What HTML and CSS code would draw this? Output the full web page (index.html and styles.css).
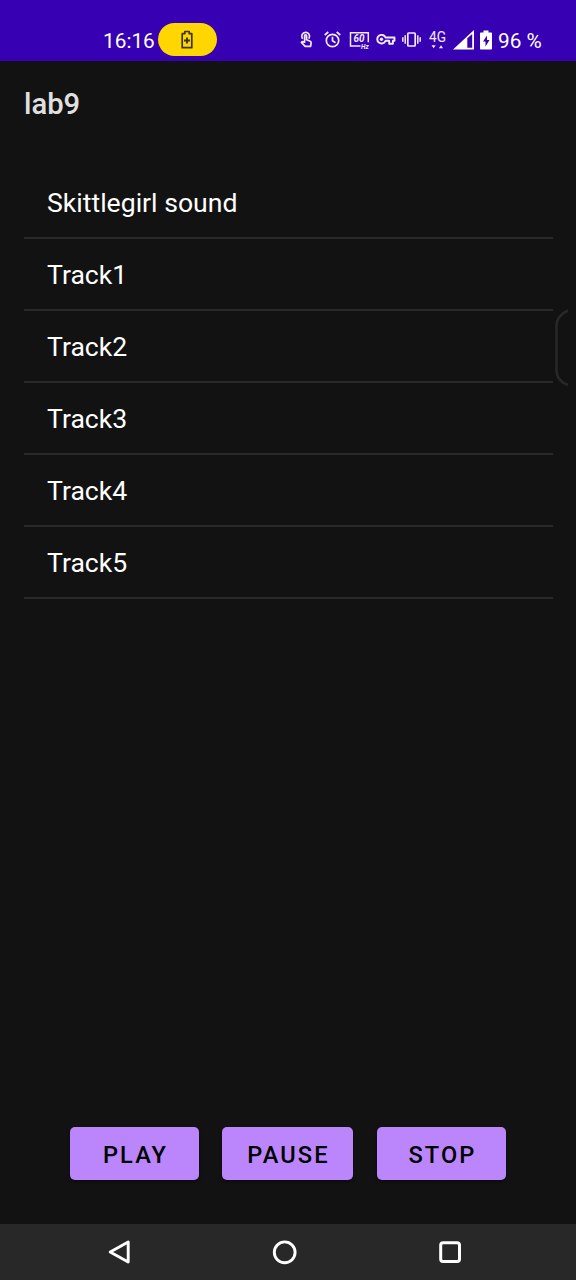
FILE: index.html
```html
<!DOCTYPE html>
<html lang="en">
<head>
<meta charset="utf-8">
<title>lab9</title>
<link rel="stylesheet" href="styles.css">
</head>
<body>
<div class="screen">
  <header class="status">
    <span class="clock">16:16</span>
    <span class="pill">
      <svg width="12" height="20" viewBox="0 0 12 20"><path d="M1.2 3.700h2.600V1.500h4.400v2.200h2.600v14H1.200z" fill="none" stroke="#3c3410" stroke-width="1.700" stroke-linejoin="round"/><path d="M6 7.500v6M3 10.500h6" stroke="#3c3410" stroke-width="1.900"/></svg>
    </span>
    <div class="icons">
      <svg width="26" height="20" viewBox="0 0 26 20"><g fill="none" stroke="#f3e9ff" stroke-width="1.700" stroke-linecap="round" stroke-linejoin="round"><path d="M3.300 8.200a3.900 3.900 0 1 1 6.800-.2"/><path d="M5.600 12.200V5.800c0-1.400 2-1.400 2 0v4l3.600 1.400c.8.300 1 .9.900 1.600l-.5 3.500H6.200l-3.800-4 .9-.6z"/></g></svg>
      <svg width="24" height="20" viewBox="0 0 24 20"><g fill="none" stroke="#f3e9ff" stroke-width="1.700"><circle cx="7.500" cy="10.500" r="6.200"/><path d="M7.500 6.800v4l3 1.900M-.3 5l3.600-3M15.300 5l-3.600-3"/></g></svg>
      <svg width="27" height="20" viewBox="0 0 27 20"><path d="M11.500 16H1.500V2.700h17.800v9.500" fill="none" stroke="#f3e9ff" stroke-width="1.500"/><text x="4.400" y="12.200" class="hz-num" textLength="11" lengthAdjust="spacingAndGlyphs">60</text><text x="12" y="18.500" class="hz">Hz</text></svg>
      <svg width="26" height="20" viewBox="0 0 26 20"><path d="M9.500 7.500h9v3.300h-1.600v3h-3.700v-3H9.500a4.300 4.300 0 1 1 0-3.300z" fill="none" stroke="#f3e9ff" stroke-width="1.900" stroke-linejoin="round"/><circle cx="5.500" cy="9.200" r="1.700" fill="#f3e9ff"/></svg>
      <svg width="26" height="20" viewBox="0 0 26 20"><rect x="5.800" y="3" width="7.400" height="13" rx=".8" fill="none" stroke="#f3e9ff" stroke-width="1.700"/><path d="M3.200 5.300v8.400M.8 7.200v4.600M15.800 5.300v8.400M18.200 7.200v4.600" stroke="#f3e9ff" stroke-width="1.500"/></svg>
      <svg width="24" height="20" viewBox="0 0 24 20"><text x="1" y="12" class="net" textLength="17" lengthAdjust="spacingAndGlyphs">4G</text><path d="M3.500 15.300h4.200l-2.100 3zM10.900 18.300h4.200l-2.100-3z" fill="#f3e9ff"/></svg>
      <svg width="26" height="20" viewBox="0 0 26 20"><path fill-rule="evenodd" d="M1 19.500 22 0v19.500zM15.300 8.300v9.400h4.900V4z" fill="#fff"/></svg>
      <svg width="17" height="20" viewBox="-1 0 17 20"><path d="M2 2.500h2.500V.5h5v2H12c.6 0 1 .4 1 1v15c0 .6-.4 1-1 1H2c-.6 0-1-.4-1-1v-15c0-.6.4-1 1-1z" fill="#fff"/><path d="M8 5.500 4 11.500h2.500v5L10.500 10H8z" fill="#3700a8"/></svg>
    </div>
    <span class="percent">96 %</span>
  </header>
  <h1 class="title">lab9</h1>
  <ul class="tracks">
    <li>Skittlegirl sound</li>
    <li>Track1</li>
    <li>Track2</li>
    <li>Track3</li>
    <li>Track4</li>
    <li>Track5</li>
  </ul>
  <svg class="edge-handle" width="13" height="78" viewBox="0 0 13 78"><path d="M13 1.500C6 4.500 1.500 9 1.500 17v44c0 8 4.500 12.500 11.500 15" fill="none" stroke="#282828" stroke-width="2.500"/></svg>
  <div class="controls">
    <button class="play">PLAY</button>
    <button class="pause">PAUSE</button>
    <button class="stop">STOP</button>
  </div>
  <nav class="navbar">
    <svg width="24" height="26" viewBox="0 0 24 26"><path d="M20.200 3v20L2.200 13z" fill="none" stroke="#fff" stroke-width="2.900" stroke-linejoin="round"/></svg>
    <svg width="26" height="26" viewBox="0 0 26 26"><circle cx="12.700" cy="13.300" r="10.400" fill="none" stroke="#fff" stroke-width="2.900"/></svg>
    <svg width="24" height="26" viewBox="0 0 24 26"><rect x="2.700" y="3.700" width="18.800" height="18.800" rx="2.400" fill="none" stroke="#fff" stroke-width="3"/></svg>
  </nav>
</div>
</body>
</html>
```
FILE: styles.css
```css
* { box-sizing: border-box; }
body { margin: 0; background: #121212; font-family: Roboto, "Liberation Sans", sans-serif; }
svg { display: block; flex: none; overflow: visible; }
.screen { position: relative; width: 576px; height: 1280px; display: flex; flex-direction: column; background: #121212; color: #fff; }
.status { height: 61px; flex: none; display: flex; align-items: center; padding: 18px 0 0 103px; background: #3700b3; white-space: nowrap; }
.clock { width: 55px; padding-top: 3px; font-size: 20.8px; line-height: 44px; font-weight: 450; }
.pill { width: 59px; height: 33px; border-radius: 17px; background: #ffd600; display: flex; align-items: center; justify-content: center; padding-right: 1px; }
.icons { display: flex; margin-left: 82px; }
.hz-num { font-size: 10.5px; font-weight: 700; font-style: italic; fill: #f3e9ff; }
.hz { font-size: 6.5px; font-weight: 700; font-style: italic; fill: #f3e9ff; }
.net { font-size: 14px; fill: #f3e9ff; }
.percent { padding-top: 3px; font-size: 20.8px; line-height: 44px; font-weight: 450; margin-left: 3px; }
.title { margin: 0; padding-left: 24px; height: 106px; flex: none; font-size: 29.2px; line-height: 87px; font-weight: 500; color: #e0e0e0; }
.tracks { list-style: none; margin: 0 23px 0 24px; padding: 0; flex: 1; }
.tracks li { height: 72px; padding-left: 23px; border-bottom: 2px solid #292929; font-size: 26.6px; line-height: 71px; }
.edge-handle { position: absolute; left: 555px; top: 309px; }
.controls { display: flex; padding-left: 70px; gap: 23px; height: 97px; flex: none; }
.controls button { width: 129px; height: 53px; border: 0; border-radius: 5px; padding: 3px 0 0 2px; background: #bb86fc; color: #000; font: 500 23.6px/50px Roboto, sans-serif; letter-spacing: 2.1px; box-shadow: 0 2px 3px #00000066; }
.controls .pause { width: 131px; }
.controls .stop { margin-left: 1px; }
.navbar { height: 56px; flex: none; display: flex; align-items: center; justify-content: space-between; padding: 0 114px 0 108px; background: #282828; }
```
